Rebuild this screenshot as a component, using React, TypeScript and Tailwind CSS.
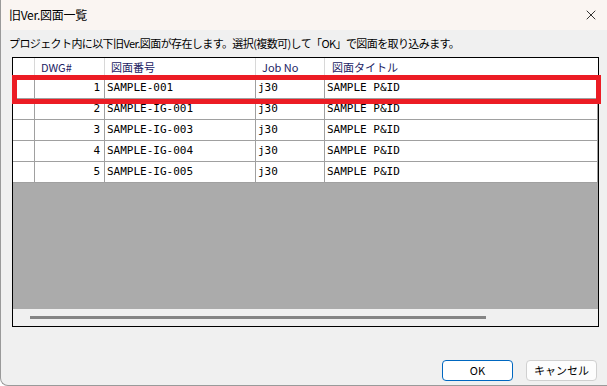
import { X } from 'lucide-react';

const rows = [
  { dwg: 1, no: 'SAMPLE-001', job: 'j30', title: 'SAMPLE P&ID' },
  { dwg: 2, no: 'SAMPLE-IG-001', job: 'j30', title: 'SAMPLE P&ID' },
  { dwg: 3, no: 'SAMPLE-IG-003', job: 'j30', title: 'SAMPLE P&ID' },
  { dwg: 4, no: 'SAMPLE-IG-004', job: 'j30', title: 'SAMPLE P&ID' },
  { dwg: 5, no: 'SAMPLE-IG-005', job: 'j30', title: 'SAMPLE P&ID' },
];

const ui = "font-['Segoe_UI','Noto_Sans_CJK_JP',sans-serif]";
const cell = "font-['DejaVu_Sans_Mono','Noto_Sans_CJK_JP',monospace] text-[11px] text-black border-r border-b border-[#a0a0a0] bg-white flex items-center overflow-hidden whitespace-nowrap";

export default function App() {
  return (
    <div className={`relative w-[607px] h-[386px] bg-[#f0f0f0] border-l border-b border-[#9a9a9a] rounded-bl-[8px] flex flex-col overflow-hidden ${ui}`}>
      {/* title bar */}
      <div className="h-[30px] bg-[#faf5f2] flex items-center justify-between pl-[8px] pr-[8px] shrink-0">
        <span className="text-[12px] text-black tracking-[-0.3px]">旧Ver.図面一覧</span>
        <X className="w-[16px] h-[16px] text-black" strokeWidth={1.2} />
      </div>

      {/* message */}
      <div className="h-[27px] flex items-center pl-[8px] shrink-0">
        <span className="text-[11px] text-black tracking-[-0.6px]">
          プロジェクト内に以下旧Ver.図面が存在します。選択(複数可)して「OK」で図面を取り込みます。
        </span>
      </div>

      {/* grid */}
      <div className="ml-[11px] w-[587px] h-[270px] border border-black bg-[#ababab] flex flex-col shrink-0">
        <div className="grid grid-cols-[22px_70px_151px_69px_1fr] h-[20px] bg-white">
          <div className="border-r border-b border-[#d8d8d8]" />
          <div className="border-r border-b border-[#d8d8d8] flex items-center pl-[6px] text-[11px] text-[#1b2263]">DWG#</div>
          <div className="border-r border-b border-[#d8d8d8] flex items-center pl-[6px] text-[11px] text-[#1b2263]">図面番号</div>
          <div className="border-r border-b border-[#d8d8d8] flex items-center pl-[6px] text-[11px] text-[#1b2263]">Job No</div>
          <div className="border-b border-[#d8d8d8] flex items-center pl-[7px] text-[11px] text-[#1b2263]">図面タイトル</div>
        </div>
        {rows.map(r => (
          <div key={r.dwg} className="grid grid-cols-[22px_70px_151px_69px_1fr] h-[21px]">
            <div className={cell} />
            <div className={`${cell} justify-end pr-[4px]`}>{r.dwg}</div>
            <div className={`${cell} pl-[2px]`}>{r.no}</div>
            <div className={`${cell} pl-[2px]`}>{r.job}</div>
            <div className={`${cell} pl-[2px]`}>{r.title}</div>
          </div>
        ))}
        <div className="flex-1" />
        {/* horizontal scrollbar */}
        <div className="h-[17px] bg-[#f0f0f0] flex items-center pl-[17px]">
          <div className="w-[456px] h-[3px] bg-[#858585]" />
        </div>
      </div>

      {/* buttons */}
      <div className="flex justify-end gap-[13px] pr-[10px] mt-[33px]">
        <button className="w-[71px] h-[21px] bg-white border border-[#0067c0] rounded-[4px] text-[11px] text-black flex items-center justify-center">OK</button>
        <button className="w-[71px] h-[21px] bg-[#fdfdfd] border border-[#d0d0d0] rounded-[4px] text-[11px] text-black flex items-center justify-center">キャンセル</button>
      </div>

      {/* red highlight annotation */}
      <div className="absolute left-[11px] top-[75px] w-[589px] h-[29px] border-[5px] border-[#ec1c24] pointer-events-none" />
    </div>
  );
}
